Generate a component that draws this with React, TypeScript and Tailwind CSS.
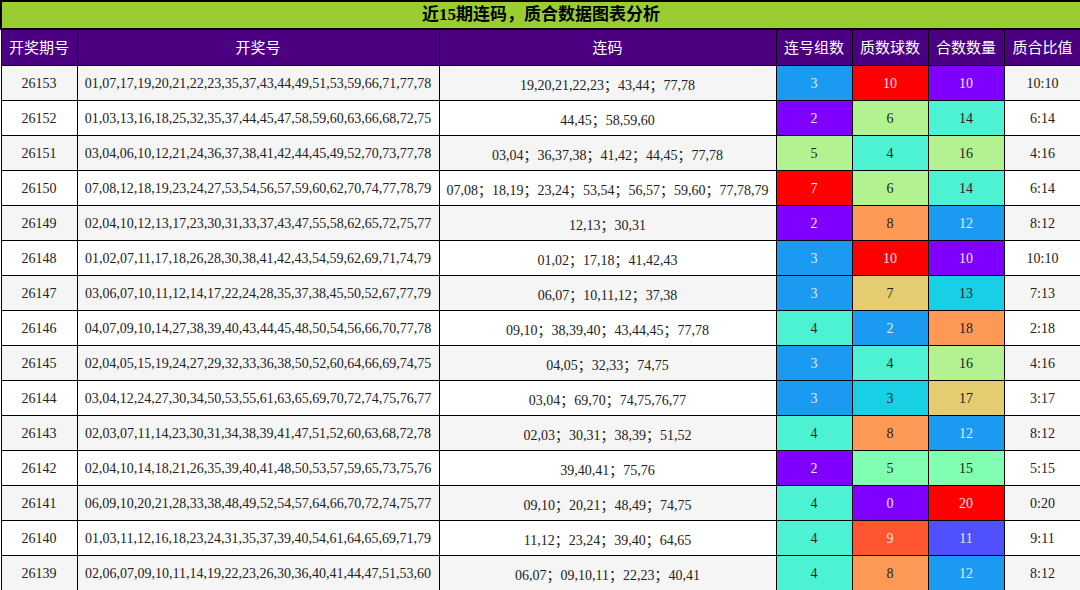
const C: Record<string, [string, boolean]> = {
  b: ["#1a9af0", true], r: ["#ff0000", true], p: ["#8000ff", true], g: ["#b3f291", false],
  t: ["#4df2d2", false], o: ["#ff9955", false], n: ["#e6cc70", false], c: ["#19cfe6", false],
  m: ["#80ffb0", false], x: ["#ff5530", true], i: ["#5050ff", true],
};
const rows: [string, string, string, [string, string][], string][] = [
  ["26153","01,07,17,19,20,21,22,23,35,37,43,44,49,51,53,59,66,71,77,78","19,20,21,22,23；43,44；77,78",[["3","b"],["10","r"],["10","p"]],"10:10"],
  ["26152","01,03,13,16,18,25,32,35,37,44,45,47,58,59,60,63,66,68,72,75","44,45；58,59,60",[["2","p"],["6","g"],["14","t"]],"6:14"],
  ["26151","03,04,06,10,12,21,24,36,37,38,41,42,44,45,49,52,70,73,77,78","03,04；36,37,38；41,42；44,45；77,78",[["5","g"],["4","t"],["16","g"]],"4:16"],
  ["26150","07,08,12,18,19,23,24,27,53,54,56,57,59,60,62,70,74,77,78,79","07,08；18,19；23,24；53,54；56,57；59,60；77,78,79",[["7","r"],["6","g"],["14","t"]],"6:14"],
  ["26149","02,04,10,12,13,17,23,30,31,33,37,43,47,55,58,62,65,72,75,77","12,13；30,31",[["2","p"],["8","o"],["12","b"]],"8:12"],
  ["26148","01,02,07,11,17,18,26,28,30,38,41,42,43,54,59,62,69,71,74,79","01,02；17,18；41,42,43",[["3","b"],["10","r"],["10","p"]],"10:10"],
  ["26147","03,06,07,10,11,12,14,17,22,24,28,35,37,38,45,50,52,67,77,79","06,07；10,11,12；37,38",[["3","b"],["7","n"],["13","c"]],"7:13"],
  ["26146","04,07,09,10,14,27,38,39,40,43,44,45,48,50,54,56,66,70,77,78","09,10；38,39,40；43,44,45；77,78",[["4","t"],["2","b"],["18","o"]],"2:18"],
  ["26145","02,04,05,15,19,24,27,29,32,33,36,38,50,52,60,64,66,69,74,75","04,05；32,33；74,75",[["3","b"],["4","t"],["16","g"]],"4:16"],
  ["26144","03,04,12,24,27,30,34,50,53,55,61,63,65,69,70,72,74,75,76,77","03,04；69,70；74,75,76,77",[["3","b"],["3","c"],["17","n"]],"3:17"],
  ["26143","02,03,07,11,14,23,30,31,34,38,39,41,47,51,52,60,63,68,72,78","02,03；30,31；38,39；51,52",[["4","t"],["8","o"],["12","b"]],"8:12"],
  ["26142","02,04,10,14,18,21,26,35,39,40,41,48,50,53,57,59,65,73,75,76","39,40,41；75,76",[["2","p"],["5","m"],["15","m"]],"5:15"],
  ["26141","06,09,10,20,21,28,33,38,48,49,52,54,57,64,66,70,72,74,75,77","09,10；20,21；48,49；74,75",[["4","t"],["0","p"],["20","r"]],"0:20"],
  ["26140","01,03,11,12,16,18,23,24,31,35,37,39,40,54,61,64,65,69,71,79","11,12；23,24；39,40；64,65",[["4","t"],["9","x"],["11","i"]],"9:11"],
  ["26139","02,06,07,09,10,11,14,19,22,23,26,30,36,40,41,44,47,51,53,60","06,07；09,10,11；22,23；40,41",[["4","t"],["8","o"],["12","b"]],"8:12"],
];
const sans = { fontFamily: '"Noto Sans CJK SC", sans-serif' };
export default function App() {
  return (
    <div className="w-[1080px] h-[590px] bg-white" style={{ fontFamily: '"Liberation Serif", "Noto Sans CJK SC", serif' }}>
      <table className="w-[1080px] border-collapse table-fixed text-[14px] text-[#222]">
        <colgroup>
          <col className="w-[76px]" /><col className="w-[362px]" /><col className="w-[337px]" />
          <col className="w-[76px]" /><col className="w-[76px]" /><col className="w-[76px]" /><col className="w-[77px]" />
        </colgroup>
        <thead>
          <tr className="h-[27px]">
            <th colSpan={7} className="border-2 border-black bg-[#9acd32] text-[17px] font-bold text-black p-0" style={{ fontFamily: '"Liberation Serif", "Noto Sans CJK SC", serif' }}>近15期连码，质合数据图表分析</th>
          </tr>
          <tr className="h-[37px] bg-[#4b0082] text-white text-[15px] font-normal" style={sans}>
            {["开奖期号","开奖号","连码","连号组数","质数球数","合数数量","质合比值"].map(h => (
              <th key={h} className="border border-black font-normal p-0">{h}</th>
            ))}
          </tr>
        </thead>
        <tbody>
          {rows.map((r, i) => (
            <tr key={r[0]} className={`h-[35px] ${i % 2 === 0 ? "bg-[#f5f5f5]" : "bg-white"}`}>
              <td className="border border-black text-center p-0">{r[0]}</td>
              <td className="border border-black text-center p-0 whitespace-nowrap">{r[1]}</td>
              <td className="border border-black text-center p-0 whitespace-nowrap pt-[4px]">{r[2]}</td>
              {r[3].map(([v, k], j) => (
                <td key={j} className="border border-black text-center p-0" style={{ background: C[k][0], color: C[k][1] ? "#e8e8f0" : "#222" }}>{v}</td>
              ))}
              <td className="border border-black text-center p-0">{r[4]}</td>
            </tr>
          ))}
        </tbody>
      </table>
    </div>
  );
}
